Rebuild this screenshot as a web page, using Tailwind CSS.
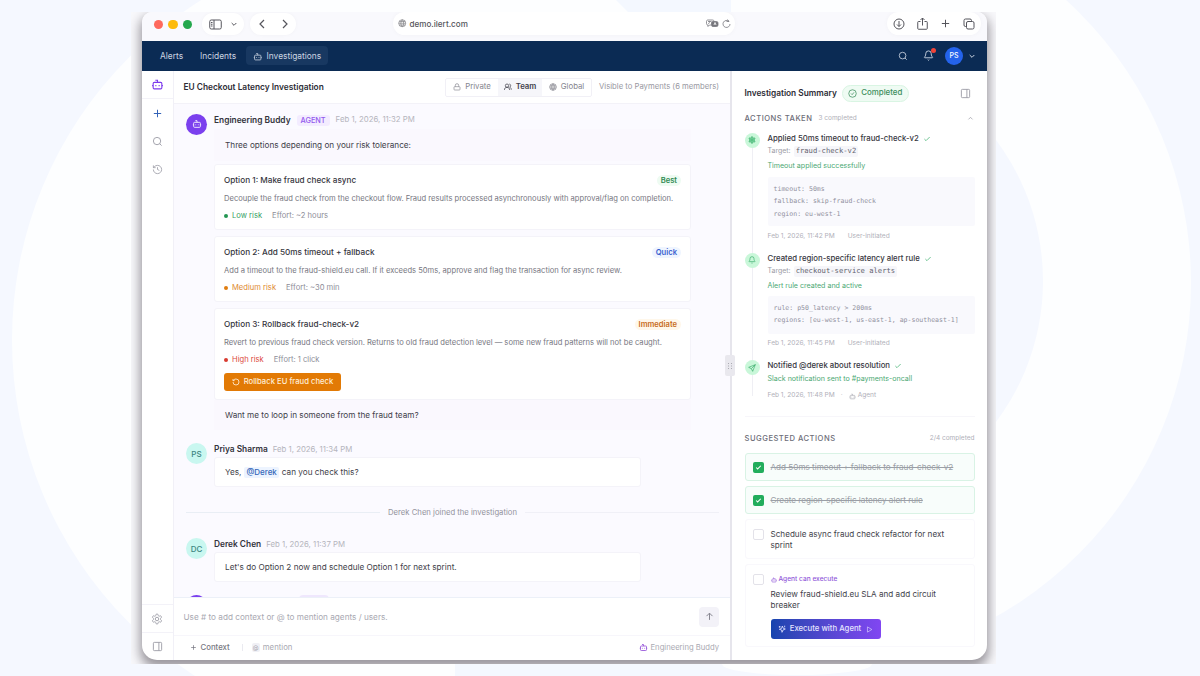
<!DOCTYPE html>
<html lang="en">
<head>
  <meta charset="UTF-8" />
  <meta name="viewport" content="width=device-width, initial-scale=1" />
  <title>EU Checkout Latency Investigation</title>
  <script src="https://cdn.jsdelivr.net/npm/@tailwindcss/browser@4"></script>
</head>
<body class="relative w-[1200px] h-[676px] overflow-hidden bg-[#f5f8ff] font-['Inter','Liberation_Sans',sans-serif] text-[8px] text-[#3f3f4a]">

  <!-- icons -->
  <svg class="hidden">
    <symbol id="bot" viewBox="0 0 24 24"><path d="M12 8V4H8"/><rect x="4" y="8" width="16" height="12" rx="2"/><path d="M2 14h2M20 14h2M15 13v2M9 13v2"/></symbol>
    <symbol id="search" viewBox="0 0 24 24"><circle cx="11" cy="11" r="8"/><path d="m21 21-4.3-4.3"/></symbol>
    <symbol id="history" viewBox="0 0 24 24"><path d="M3 12a9 9 0 1 0 9-9 9.750 9.750 0 0 0-6.740 2.740L3 8"/><path d="M3 3v5h5M12 7v5l4 2"/></symbol>
    <symbol id="undo" viewBox="0 0 24 24"><path d="M3 12a9 9 0 1 0 9-9 9.750 9.750 0 0 0-6.740 2.740L3 8"/><path d="M3 3v5h5"/></symbol>
    <symbol id="plus" viewBox="0 0 24 24"><path d="M4 12h16M12 4v16"/></symbol>
    <symbol id="down" viewBox="0 0 24 24"><path d="m5 9 7 7 7-7"/></symbol>
    <symbol id="up" viewBox="0 0 24 24"><path d="m5 15 7-7 7 7"/></symbol>
    <symbol id="check" viewBox="0 0 24 24"><path d="M20 6 9 17l-5-5"/></symbol>
    <symbol id="circle-check" viewBox="0 0 24 24"><circle cx="12" cy="12" r="10"/><path d="m8 12 3 3 5-6"/></symbol>
    <symbol id="panel" viewBox="0 0 24 24"><rect x="3" y="3" width="18" height="18" rx="2"/><path d="M15 3v18"/></symbol>
    <symbol id="globe" viewBox="0 0 24 24"><circle cx="12" cy="12" r="10"/><path d="M12 2a14.500 14.500 0 0 0 0 20 14.500 14.500 0 0 0 0-20M2 12h20M4 7h16M4 17h16"/></symbol>
    <symbol id="lock" viewBox="0 0 24 24"><rect x="3" y="11" width="18" height="10" rx="2"/><path d="M7 11V7a5 5 0 0 1 10 0v4"/></symbol>
    <symbol id="users" viewBox="0 0 24 24"><circle cx="9" cy="8" r="5"/><path d="M1 21c0-5 3-8 8-8s8 3 8 8M16 3a5 5 0 0 1 1 9.500c3 1 5 4 5 7.500"/></symbol>
    <symbol id="bell" viewBox="0 0 24 24"><path d="M10.300 21a2 2 0 0 0 3.400 0M3.300 15.300A1 1 0 0 0 4 17h16a1 1 0 0 0 .7-1.700C19.400 14 18 12.500 18 8A6 6 0 0 0 6 8c0 4.500-1.400 6-2.700 7.300"/></symbol>
    <symbol id="send" viewBox="0 0 24 24"><path d="M22 2 2 10l8 4 4 8zM22 2 10 14"/></symbol>
    <symbol id="gear" viewBox="0 0 24 24"><path d="M12.200 2h-.4a2 2 0 0 0-2 2 2 2 0 0 1-1 1.900l-.4.2a2 2 0 0 1-2 0 2 2 0 0 0-2.900.6l-.2.400a2 2 0 0 0 .7 2.700 2 2 0 0 1 1 1.900v.5a2 2 0 0 1-1 1.900 2 2 0 0 0-.7 2.700l.2.400a2 2 0 0 0 2.700.7 2 2 0 0 1 2.200 0l.4.200a2 2 0 0 1 1 1.900 2 2 0 0 0 2 2h.4a2 2 0 0 0 2-2 2 2 0 0 1 1-1.900l.4-.2a2 2 0 0 1 2.200 0 2 2 0 0 0 2.700-.7l.2-.4a2 2 0 0 0-.7-2.700 2 2 0 0 1-1-1.900v-.5a2 2 0 0 1 1-1.900 2 2 0 0 0 .7-2.700l-.2-.4a2 2 0 0 0-2.700-.7 2 2 0 0 1-2.200 0l-.4-.2a2 2 0 0 1-1-1.900 2 2 0 0 0-2-1.900z"/><circle cx="12" cy="12" r="3.500"/></symbol>
  </svg>

  <!-- page backdrop -->
  <svg class="absolute inset-0" width="1200" height="676">
    <circle cx="412" cy="340" r="400" fill="#fdfeff"/>
    <circle cx="808" cy="283" r="383" fill="#fdfeff"/>
    <circle cx="808" cy="281" r="235" fill="#f5f8ff"/>
    <path d="M616 0h115v12H628zM455 655h225l45 21H455z" fill="#f4f8ff"/>
    <ellipse cx="797" cy="664" rx="75" ry="11" fill="#fdfeff"/>
  </svg>

  <div class="absolute left-[131px] top-3 w-[865px] h-[652px] overflow-hidden bg-[#f8f8fb] pl-[11px] pr-[9px] pb-1">
    <div class="w-[845px] h-[648px] flex flex-col rounded-t-[10px] rounded-b-[15px] overflow-hidden bg-white shadow-[0_6px_11px_2px_rgba(50,44,54,0.48)]">

      <!-- browser bar -->
      <div class="h-[28.500px] shrink-0 flex items-center bg-[#f9f9fd] text-[#55555c] relative">
        <div class="flex gap-[5px] ml-[11.500px] mt-[-4px]">
          <span class="size-[9.500px] rounded-full bg-[#fe695d]"></span>
          <span class="size-[9.500px] rounded-full bg-[#fdbb0c]"></span>
          <span class="size-[9.500px] rounded-full bg-[#24a84d]"></span>
        </div>
        <div class="flex items-center gap-[8px] h-[22px] w-[42px] ml-[10px] mt-[-4px] pl-[7px] rounded-full bg-white shadow-[0_0_4px_rgba(0,0,0,0.03)]">
          <svg class="w-[13px] h-[11px] shrink-0" viewBox="0 0 26 22" fill="none" stroke="currentColor" stroke-width="2"><rect x="1.500" y="2" width="23" height="18" rx="3"/><path d="M10 2v18M4 7h3M4 10.500h3M4 14h3"/></svg>
          <svg class="size-[8px] shrink-0" fill="none" stroke="currentColor" stroke-width="3"><use href="#down"/></svg>
        </div>
        <div class="flex items-center justify-center gap-[17px] h-[22px] w-[46px] ml-[6px] mt-[-4px] rounded-full bg-white shadow-[0_0_4px_rgba(0,0,0,0.03)]">
          <svg class="w-[6px] h-[10px]" viewBox="0 0 12 20" fill="none" stroke="currentColor" stroke-width="2.400"><path d="m10 2-8 8 8 8"/></svg>
          <svg class="w-[6px] h-[10px]" viewBox="0 0 12 20" fill="none" stroke="currentColor" stroke-width="2.400"><path d="m2 2 8 8-8 8"/></svg>
        </div>
        <div class="absolute left-[251px] top-0 w-[342px] h-[23px] flex items-center rounded-full bg-white pl-[5px] pr-[4px] shadow-[0_0_5px_rgba(0,0,0,0.03)]">
          <svg class="size-[8.500px]" fill="none" stroke="#77777d" stroke-width="1.800"><use href="#globe"/></svg>
          <span class="ml-[3px] mt-[1px] text-[8.100px] font-medium text-[#55555b]">demo.ilert.com</span>
          <svg class="ml-auto w-[13px] h-[9px]" viewBox="0 0 26 18" fill="none" stroke="#77777d" stroke-width="1.600"><path d="M10 12H7l-3 3v-3c-2 0-3-1-3-3V5c0-2 1-3 3-3h9c2 0 3 1 3 3M4 5h7M7 5c0 3-1 4-3 5"/><rect x="11" y="5" width="13" height="10" rx="3" fill="#77777d"/><path d="m16 12 2-5 2 5" stroke="#fff"/></svg>
          <svg class="ml-[3px] size-[9px]" viewBox="0 0 18 18" fill="none" stroke="#77777d" stroke-width="1.600"><path d="M14 5a7 7 0 1 0 2 5M14 5H9M14 5 11 1"/></svg>
        </div>
        <div class="absolute right-[6px] top-0 h-[23px] w-[94px] flex items-center justify-between rounded-full bg-white pl-[6px] pr-[6px] shadow-[0_0_5px_rgba(0,0,0,0.03)]">
          <svg class="size-[12px]" viewBox="0 0 24 24" fill="none" stroke="currentColor" stroke-width="2"><circle cx="12" cy="12" r="10"/><path d="M12 6v11M8 13l4 4 4-4"/></svg>
          <svg class="w-[11px] h-[13px]" viewBox="0 0 22 26" fill="none" stroke="currentColor" stroke-width="2"><path d="M7 9H3a1.500 1.500 0 0 0-1.500 1.500V23A1.500 1.500 0 0 0 3 24.500h16a1.500 1.500 0 0 0 1.500-1.500V10.500A1.500 1.500 0 0 0 19 9h-4M11 17V2M7 6l4-4 4 4"/></svg>
          <svg class="size-[11px]" fill="none" stroke="currentColor" stroke-width="2.200"><use href="#plus"/></svg>
          <svg class="size-[12px]" viewBox="0 0 24 24" fill="none" stroke="currentColor" stroke-width="2"><rect x="7" y="7" width="15" height="15" rx="3"/><path d="M7 17H5a3 3 0 0 1-3-3V5a3 3 0 0 1 3-3h9a3 3 0 0 1 3 3v2"/></svg>
        </div>
      </div>

      <!-- app nav -->
      <div class="h-[30.500px] shrink-0 flex items-center bg-[#0b2b54] text-[#ccd5e2] text-[8.400px] pr-[11px]">
        <span class="ml-[18px] mt-[1px]">Alerts</span>
        <span class="ml-[17px] mt-[1px]">Incidents</span>
        <span class="ml-[10px] h-[19px] w-[82px] flex items-center justify-center gap-[4px] rounded bg-[#183861] pt-[1px]">
          <svg class="size-[9.500px]" fill="none" stroke="currentColor" stroke-width="2"><use href="#bot"/></svg>Investigations
        </span>
        <svg class="ml-auto size-[10px]" fill="none" stroke="currentColor" stroke-width="2"><use href="#search"/></svg>
        <span class="relative ml-[15px] mr-[11px]">
          <svg class="size-[11px]" fill="none" stroke="currentColor" stroke-width="2"><use href="#bell"/></svg>
          <span class="absolute -top-[2px] -right-[2px] size-[5px] rounded-full bg-[#f04438]"></span>
        </span>
        <span class="size-[18px] pt-[1px] rounded-full bg-[#2463eb] text-white text-[7px] flex items-center justify-center font-medium">PS</span>
        <svg class="ml-[5px] size-[8px]" fill="none" stroke="currentColor" stroke-width="3"><use href="#down"/></svg>
      </div>

      <div class="flex-1 min-h-0 flex">
        <!-- icon rail -->
        <div class="w-[31.500px] shrink-0 flex flex-col items-center border-r border-[#f1f0f7] text-[#9c9ca6]">
          <div class="h-[28px] w-full flex items-center justify-center border-b border-[#f3f2f8]">
            <svg class="size-[13px] text-[#7c3aed]" fill="none" stroke="currentColor" stroke-width="2"><use href="#bot"/></svg>
          </div>
          <svg class="mt-[9px] size-[11px]" fill="none" stroke="#3463b8" stroke-width="2.200"><use href="#plus"/></svg>
          <svg class="mt-[17px] size-[11px]" fill="none" stroke="currentColor" stroke-width="2"><use href="#search"/></svg>
          <svg class="mt-[17px] size-[11px]" fill="none" stroke="currentColor" stroke-width="1.800"><use href="#history"/></svg>
          <div class="mt-auto h-[28px] w-full flex items-center justify-center border-t border-[#f3f2f8]">
            <svg class="size-[12px]" fill="none" stroke="currentColor" stroke-width="1.800"><use href="#gear"/></svg>
          </div>
          <div class="h-[28px] w-full flex items-center justify-center border-t border-[#f3f2f8]">
            <svg class="size-[11px]" fill="none" stroke="currentColor" stroke-width="2"><use href="#panel"/></svg>
          </div>
        </div>

        <!-- chat column -->
        <div class="w-[556.500px] shrink-0 flex flex-col">
          <div class="h-[32.500px] shrink-0 flex items-center border-b border-[#f3f2f8] pl-[10px] pr-[11px] pt-[1px]">
            <span class="text-[8.350px] font-semibold text-[#2d2d36]">EU Checkout Latency Investigation</span>
            <div class="ml-auto h-[19px] flex items-center rounded-xs border border-[#f1f0f6] text-[#85858e] text-[7.800px]">
              <span class="w-[52px] flex items-center justify-center gap-[4px]"><svg class="size-[8px]" fill="none" stroke="currentColor" stroke-width="2"><use href="#lock"/></svg>Private</span>
              <span class="w-[44px] h-full flex items-center justify-center gap-[4px] bg-[#f6f6fa] font-semibold text-[#3f3f4a]"><svg class="size-[8px]" fill="none" stroke="currentColor" stroke-width="2.200"><use href="#users"/></svg>Team</span>
              <span class="w-[49px] flex items-center justify-center gap-[4px]"><svg class="size-[8px]" fill="none" stroke="currentColor" stroke-width="2"><use href="#globe"/></svg>Global</span>
            </div>
            <span class="ml-[7px] text-[7.700px] text-[#9898a1]">Visible to Payments (6 members)</span>
          </div>

          <div class="flex-1 min-h-0 overflow-hidden bg-[#fbfaff] pl-[12.500px] pr-[11px] pt-[10px]">
            <!-- agent message -->
            <div class="flex gap-[7px]">
              <div class="size-[21px] shrink-0 rounded-full bg-[#7b40ee] text-white flex items-center justify-center">
                <svg class="size-[10px]" fill="none" stroke="currentColor" stroke-width="2"><use href="#bot"/></svg>
              </div>
              <div class="w-[477px]">
                <div class="h-[15.500px] pb-[2px] flex items-center gap-[6px]">
                  <b class="text-[8.350px] font-semibold text-[#33333c]">Engineering Buddy</b>
                  <span class="px-[4px] leading-[11px] rounded-[3px] bg-[#f3ecff] text-[7.300px] font-medium text-[#9258ee]">AGENT</span>
                  <span class="text-[7.800px] text-[#b5b5bd]">Feb 1, 2026, 11:32 PM</span>
                </div>
                <div class="h-[32px] bg-[#faf8fe] flex items-center pl-[11px] text-[8.200px]">Three options depending on your risk tolerance:</div>

                <div class="mt-[3px] h-[66px] rounded-[3px] border border-[#f4f3f9] bg-white px-[9px] pt-[8px]">
                  <div class="h-[14px] flex items-center justify-between"><span class="text-[8.200px] font-medium text-[#363640]">Option 1: Make fraud check async</span><span class="px-[4px] leading-[11px] rounded-full bg-[#eefbf2] text-[7.600px] font-semibold text-[#2f8a52]">Best</span></div>
                  <div class="mt-[5px] leading-[14px] text-[7.600px] text-[#777781] whitespace-nowrap">Decouple the fraud check from the checkout flow. Fraud results processed asynchronously with approval/flag on completion.</div>
                  <div class="mt-[4px] h-[12px] flex items-center text-[7.600px] text-[#8e8e98]"><i class="size-[4px] rounded-full bg-[#239652] mr-[4px]"></i><span class="text-[#35a163]">Low risk</span><span class="ml-[10px]">Effort: ~2 hours</span></div>
                </div>
                <div class="mt-[6px] h-[66px] rounded-[3px] border border-[#f4f3f9] bg-white px-[9px] pt-[8px]">
                  <div class="h-[14px] flex items-center justify-between"><span class="text-[8.200px] font-medium text-[#363640]">Option 2: Add 50ms timeout + fallback</span><span class="px-[4px] leading-[11px] rounded-full bg-[#eff5ff] text-[7.600px] font-semibold text-[#3b62cf]">Quick</span></div>
                  <div class="mt-[5px] leading-[14px] text-[7.600px] text-[#777781] whitespace-nowrap">Add a timeout to the fraud-shield.eu call. If it exceeds 50ms, approve and flag the transaction for async review.</div>
                  <div class="mt-[4px] h-[12px] flex items-center text-[7.600px] text-[#8e8e98]"><i class="size-[4px] rounded-full bg-[#e07d10] mr-[4px]"></i><span class="text-[#de8a32]">Medium risk</span><span class="ml-[10px]">Effort: ~30 min</span></div>
                </div>
                <div class="mt-[6px] h-[92px] rounded-[3px] border border-[#f4f3f9] bg-white px-[9px] pt-[8px]">
                  <div class="h-[14px] flex items-center justify-between"><span class="text-[8.200px] font-medium text-[#363640]">Option 3: Rollback fraud-check-v2</span><span class="px-[4px] leading-[11px] rounded-full bg-[#fff7ea] text-[7.600px] font-semibold text-[#c76a20]">Immediate</span></div>
                  <div class="mt-[5px] leading-[14px] text-[7.600px] text-[#777781] whitespace-nowrap">Revert to previous fraud check version. Returns to old fraud detection level — some new fraud patterns will not be caught.</div>
                  <div class="mt-[4px] h-[12px] flex items-center text-[7.600px] text-[#8e8e98]"><i class="size-[4px] rounded-full bg-[#d83a30] mr-[4px]"></i><span class="text-[#dc4a40]">High risk</span><span class="ml-[10px]">Effort: 1 click</span></div>
                  <button class="mt-[6.500px] w-[117px] h-[18px] flex items-center justify-center gap-[4px] rounded-[3px] bg-[#e27a05] text-[7.700px] font-medium text-[#ffeed9]"><svg class="size-[8px]" fill="none" stroke="currentColor" stroke-width="2.500"><use href="#undo"/></svg>Rollback EU fraud check</button>
                </div>
                <div class="h-[30px] bg-[#faf8fe] flex items-center pl-[11px] text-[8.200px]">Want me to loop in someone from the fraud team?</div>
              </div>
            </div>

            <!-- replies -->
            <div class="mt-[13px] flex gap-[7px]">
              <div class="size-[21px] shrink-0 rounded-full bg-[#c9f7f0] text-[#3d8580] text-[8px] font-medium flex items-center justify-center">PS</div>
              <div class="w-[427px]">
                <div class="h-[14px] pb-[1px] flex items-center gap-[5px]"><b class="text-[8.350px] font-semibold text-[#33333c]">Priya Sharma</b><span class="text-[7.800px] text-[#b5b5bd]">Feb 1, 2026, 11:34 PM</span></div>
                <div class="h-[30px] rounded-[3px] border border-[#f4f3f9] bg-white flex items-center pl-[10px] text-[8.200px]">Yes,<span class="mx-[3px] px-[2px] leading-[11px] rounded-xs bg-[#edf4ff] font-medium text-[8px] text-[#3567b8]">@Derek</span>can you check this?</div>
              </div>
            </div>
            <div class="my-[18px] h-[15px] flex items-center gap-[8px] text-[7.700px] text-[#92929c]"><span class="flex-1 h-px bg-[#e9eef5]"></span>Derek Chen joined the investigation<span class="flex-1 h-px bg-[#f0f0f7]"></span></div>
            <div class="flex gap-[7px]">
              <div class="size-[21px] shrink-0 rounded-full bg-[#c9f7f0] text-[#3d8580] text-[8px] font-medium flex items-center justify-center">DC</div>
              <div class="w-[427px]">
                <div class="h-[14px] pb-[1px] flex items-center gap-[5px]"><b class="text-[8.350px] font-semibold text-[#33333c]">Derek Chen</b><span class="text-[7.800px] text-[#b5b5bd]">Feb 1, 2026, 11:37 PM</span></div>
                <div class="h-[30px] rounded-[3px] border border-[#f4f3f9] bg-white flex items-center pl-[10px] text-[8.200px]">Let's do Option 2 now and schedule Option 1 for next sprint.</div>
              </div>
            </div>
            <div class="mt-[13px] flex"><span class="size-[21px] rounded-full bg-[#7b40ee]"></span><span class="ml-[92px] w-[30px] h-[11px] rounded bg-[#efe7fd]"></span></div>
          </div>

          <!-- composer -->
          <div class="h-[37.500px] shrink-0 flex items-center justify-between border-t border-[#ecf0f8] pl-[10px] pr-[11px] pt-[1px] text-[8.200px] text-[#a9a9b2]">
            <span>Use # to add context or @ to mention agents / users.</span>
            <span class="size-[20px] rounded bg-[#f3f2f8] flex items-center justify-center"><svg class="size-[9px]" viewBox="0 0 24 24" fill="none" stroke="#777781" stroke-width="2.300"><path d="M12 21V4M4 11l8-8 8 8"/></svg></span>
          </div>
          <div class="h-[25.500px] shrink-0 flex items-center border-t border-[#f7f6fb] pl-[16px] pr-[11px] text-[7.800px] text-[#a9a9b2]">
            <svg class="size-[7px] text-[#777781]" fill="none" stroke="currentColor" stroke-width="2.500"><use href="#plus"/></svg>
            <span class="ml-[4px] font-medium text-[#777781]">Context</span>
            <span class="ml-[12px] w-px h-[7px] bg-[#eaeaf0]"></span>
            <span class="ml-[9px] w-[8px] leading-[9px] rounded-xs bg-[#f0f0f5] text-[6px] text-center">@</span>
            <span class="ml-[3px]">mention</span>
            <svg class="ml-auto size-[9px] text-[#a066dd]" fill="none" stroke="currentColor" stroke-width="2.600"><use href="#bot"/></svg>
            <span class="ml-[3px] text-[7.650px]">Engineering Buddy</span>
          </div>
        </div>

        <!-- splitter -->
        <div class="relative w-[2px] shrink-0 bg-[#e6e5ec]">
          <span class="absolute -left-[5px] top-[284px] w-[10px] h-[21px] rounded-xs bg-[#e9e8ee] flex items-center justify-center">
            <svg class="w-[4px] h-[6px]" viewBox="0 0 4 6" fill="#aaaab2"><path d="M0 0h1v1H0zM3 0h1v1H3zM0 2.500h1v1H0zM3 2.500h1v1H3zM0 5h1v1H0zM3 5h1v1H3z"/></svg>
          </span>
        </div>

        <!-- summary panel -->
        <div class="flex-1 min-w-0 pl-[12.500px] pr-[12.500px] pt-[13.500px]">
          <div class="h-[17px] flex items-center">
            <span class="text-[8.300px] font-semibold text-[#2d2d36]">Investigation Summary</span>
            <span class="ml-[5px] h-[17px] w-[67px] flex items-center justify-center gap-[4px] rounded-full border border-[#d9f5e3] bg-[#effbf3] text-[7.900px] font-medium text-[#3c8e5c]"><svg class="size-[9px]" fill="none" stroke="currentColor" stroke-width="2"><use href="#circle-check"/></svg>Completed</span>
            <svg class="ml-auto mr-[4px] size-[11px] text-[#9c9ca6]" fill="none" stroke="currentColor" stroke-width="2"><use href="#panel"/></svg>
          </div>
          <div class="mt-[10px] h-[14px] flex items-center">
            <span class="text-[7.600px] font-medium tracking-[0.500px] text-[#6d6d78]">ACTIONS TAKEN</span>
            <span class="ml-[6px] mt-[1px] text-[6.500px] text-[#b0b0b9]">3 completed</span>
            <svg class="ml-auto mr-[1px] size-[7px] text-[#9c9ca6]" fill="none" stroke="currentColor" stroke-width="2.500"><use href="#up"/></svg>
          </div>

          <div class="mt-[7px] flex gap-[8px]">
            <div class="w-[15px] flex flex-col items-center">
              <span class="size-[15px] shrink-0 rounded-full bg-[#c9f7d9] text-[#35ab68] flex items-center justify-center"><svg class="size-[8px]" fill="#7fd8a2" stroke="currentColor" stroke-width="2"><use href="#gear"/></svg></span>
              <span class="flex-1 w-px bg-[#efeff4]"></span>
            </div>
            <div class="flex-1 h-[120px] whitespace-nowrap">
              <div class="h-[12px] flex items-center gap-[4px] text-[7.780px] font-medium text-[#363640]">Applied 50ms timeout to fraud-check-v2<svg class="size-[8px] text-[#45b374]" fill="none" stroke="currentColor" stroke-width="2.300"><use href="#check"/></svg></div>
              <div class="mt-[1px] h-[12px] flex items-center text-[7px] text-[#9c9ca6]">Target:<span class="ml-[3px] px-[2px] rounded-xs bg-[#f6f6fa] font-['DejaVu_Sans_Mono',monospace] text-[7.200px] text-[#62626d]">fraud-check-v2</span></div>
              <div class="mt-[2px] leading-[12px] text-[7.080px] text-[#4aa873]">Timeout applied successfully</div>
              <div class="mt-[5px] h-[49px] py-[6px] pl-[6px] rounded-xs bg-[#f9f9fd] font-['DejaVu_Sans_Mono',monospace] text-[6.550px] leading-[12.600px] text-[#9191a0]">timeout: 50ms<br>fallback: skip-fraud-check<br>region: eu-west-1</div>
              <div class="mt-[5px] h-[12px] flex items-center gap-[13px] text-[6.600px] text-[#b0b0b9]"><span>Feb 1, 2026, 11:42 PM</span><span>User-initiated</span></div>
            </div>
          </div>
          <div class="flex gap-[8px]">
            <div class="w-[15px] flex flex-col items-center">
              <span class="size-[15px] shrink-0 rounded-full bg-[#c9f7d9] text-[#35ab68] flex items-center justify-center"><svg class="size-[8px]" fill="none" stroke="currentColor" stroke-width="2"><use href="#bell"/></svg></span>
              <span class="flex-1 w-px bg-[#efeff4]"></span>
            </div>
            <div class="flex-1 h-[107.500px] whitespace-nowrap">
              <div class="h-[12px] flex items-center gap-[4px] text-[7.780px] font-medium text-[#363640]">Created region-specific latency alert rule<svg class="size-[8px] text-[#45b374]" fill="none" stroke="currentColor" stroke-width="2.300"><use href="#check"/></svg></div>
              <div class="mt-[1px] h-[12px] flex items-center text-[7px] text-[#9c9ca6]">Target:<span class="ml-[3px] px-[2px] rounded-xs bg-[#f6f6fa] font-['DejaVu_Sans_Mono',monospace] text-[7.200px] text-[#62626d]">checkout-service alerts</span></div>
              <div class="mt-[2px] leading-[12px] text-[7.080px] text-[#4aa873]">Alert rule created and active</div>
              <div class="mt-[4px] h-[38px] py-[6px] pl-[6px] rounded-xs bg-[#f9f9fd] font-['DejaVu_Sans_Mono',monospace] text-[6.550px] leading-[12.600px] text-[#9191a0]">rule: p50_latency &gt; 200ms<br>regions: [eu-west-1, us-east-1, ap-southeast-1]</div>
              <div class="mt-[4px] h-[12px] flex items-center gap-[13px] text-[6.600px] text-[#b0b0b9]"><span>Feb 1, 2026, 11:45 PM</span><span>User-initiated</span></div>
            </div>
          </div>
          <div class="h-[57px] flex gap-[8px] border-b border-[#f7f6fa]">
            <div class="w-[15px] h-[36px] flex flex-col items-center">
              <span class="size-[15px] shrink-0 rounded-full bg-[#c9f7d9] text-[#35ab68] flex items-center justify-center"><svg class="size-[8px]" fill="none" stroke="currentColor" stroke-width="2"><use href="#send"/></svg></span>
              <span class="flex-1 w-px bg-[#efeff4]"></span>
            </div>
            <div class="flex-1 whitespace-nowrap">
              <div class="h-[12px] flex items-center gap-[4px] text-[7.780px] font-medium text-[#363640]">Notified @derek about resolution<svg class="size-[8px] text-[#45b374]" fill="none" stroke="currentColor" stroke-width="2.300"><use href="#check"/></svg></div>
              <div class="mt-[1px] leading-[12px] text-[7.080px] text-[#4aa873]">Slack notification sent to #payments-oncall</div>
              <div class="mt-[5px] h-[12px] flex items-center text-[6.600px] text-[#b0b0b9]">Feb 1, 2026, 11:48 PM<span class="mx-[6px]">·</span><svg class="size-[7px] mr-[2px]" fill="none" stroke="currentColor" stroke-width="2.500"><use href="#bot"/></svg>Agent</div>
            </div>
          </div>

          <div class="mt-[15px] h-[14px] flex items-center justify-between">
            <span class="text-[7.600px] font-medium tracking-[0.500px] text-[#6d6d78]">SUGGESTED ACTIONS</span>
            <span class="text-[6.500px] text-[#b0b0b9]">2/4 completed</span>
          </div>
          <div class="mt-[7px] flex flex-col gap-[5px] text-[8.150px]">
            <div class="h-[28px] flex items-center gap-[7px] pl-[7px] rounded-[3px] border border-[#d9f3e5] bg-[#f8fdfb] text-[#9b9fa6] line-through">
              <span class="size-[11px] rounded-xs bg-[#22ad5c] text-white flex items-center justify-center"><svg class="size-[7px]" fill="none" stroke="currentColor" stroke-width="3.500"><use href="#check"/></svg></span>Add 50ms timeout + fallback to fraud-check-v2
            </div>
            <div class="h-[28px] flex items-center gap-[7px] pl-[7px] rounded-[3px] border border-[#d9f3e5] bg-[#f8fdfb] text-[#9b9fa6] line-through">
              <span class="size-[11px] rounded-xs bg-[#22ad5c] text-white flex items-center justify-center"><svg class="size-[7px]" fill="none" stroke="currentColor" stroke-width="3.500"><use href="#check"/></svg></span>Create region-specific latency alert rule
            </div>
            <div class="h-[40px] flex gap-[7px] pl-[7px] pt-[8.500px] rounded-[3px] border border-[#f9f8fc]">
              <span class="size-[11px] shrink-0 rounded-xs border border-[#e3e2e9]"></span>
              <span class="leading-[11.500px]">Schedule async fraud check refactor for next<br>sprint</span>
            </div>
            <div class="h-[83px] flex gap-[7px] pl-[7px] pt-[8.500px] rounded-[3px] border border-[#f9f8fc]">
              <span class="size-[11px] shrink-0 rounded-xs border border-[#e3e2e9]"></span>
              <div>
                <div class="h-[12px] flex items-center gap-[2px] text-[6.600px] font-medium text-[#9158d9]"><svg class="size-[6px]" fill="none" stroke="currentColor" stroke-width="2.500"><use href="#bot"/></svg>Agent can execute</div>
                <div class="mt-[3px] leading-[11.500px]">Review fraud-shield.eu SLA and add circuit<br>breaker</div>
                <button class="mt-[7.500px] w-[110px] h-[20px] flex items-center justify-center gap-[4px] rounded-[3px] bg-linear-to-r from-[#1444ae] to-[#8146f2] text-[7.750px] font-medium text-[#e5e4ff]">
                  <svg class="size-[8px]" viewBox="0 0 24 24" fill="none" stroke="currentColor" stroke-width="2.500"><path d="m13 3-2 7-7 3 7 2 1 7 3-7 7-3-6-2zM5 3v5M2.500 5.500h5M20 2v5"/></svg>Execute with Agent<svg class="ml-[1px] size-[7px]" viewBox="0 0 24 24" fill="none" stroke="currentColor" stroke-width="2"><path d="m5 3 15 9-15 9z"/></svg>
                </button>
              </div>
            </div>
          </div>
        </div>
      </div>
    </div>
  </div>
</body>
</html>
